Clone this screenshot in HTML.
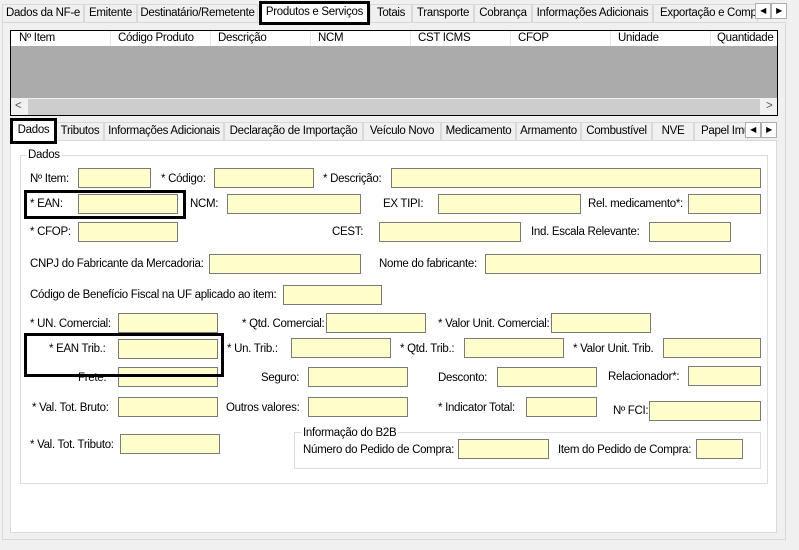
<!DOCTYPE html>
<html><head><meta charset="utf-8"><style>
*{box-sizing:border-box;margin:0;padding:0}
body{width:799px;height:550px;background:#f0f0f0;font-family:"Liberation Sans",sans-serif;font-size:11.5px;color:#000;position:relative;overflow:hidden;letter-spacing:-0.3px}
.a{position:absolute;white-space:nowrap}
.t{position:absolute;height:18px;border:1px solid #d9d9d9;border-bottom:none;background:#f0f0f0;line-height:17px;text-align:center;white-space:nowrap;overflow:hidden}
.i{position:absolute;height:20px;background:#ffffcc;border:1px solid #7a7a7a}
.l{position:absolute;white-space:nowrap;line-height:14px}
.bx{position:absolute;border:3px solid #000}
.sb{position:absolute;width:16px;height:16px;border:1px solid #adadad;background:#fff;font-size:8px;text-align:center;line-height:14px}
</style></head><body>
<!-- outer page -->
<div class="a" style="left:2px;top:22px;width:784px;height:518px;border:1px solid #d9d9d9;background:#f0f0f0"></div>
<div class="t" style="left:2px;top:4px;width:82px">Dados da NF-e</div>
<div class="t" style="left:84px;top:4px;width:53px">Emitente</div>
<div class="t" style="left:137px;top:4px;width:121px">Destinatário/Remetente</div>
<div class="t" style="left:370px;top:4px;width:42px">Totais</div>
<div class="t" style="left:412px;top:4px;width:62px">Transporte</div>
<div class="t" style="left:474px;top:4px;width:58px">Cobrança</div>
<div class="t" style="left:532px;top:4px;width:121px">Informações Adicionais</div>
<div class="t" style="left:653px;top:4px;width:105px;text-align:left;padding-left:6px">Exportação e Compra</div>
<div class="a" style="left:259px;top:1px;width:111px;height:24px;background:#fff;border:3px solid #000;text-align:center;line-height:17px">Produtos e Serviços</div>
<div class="sb" style="left:755px;top:3px">◀</div><div class="sb" style="left:771px;top:3px">▶</div>
<!-- grid -->
<div class="a" style="left:10px;top:30px;width:768px;height:86px;border:1px solid #000;background:#f0f0f0">
 <div class="a" style="left:0;top:0;width:766px;height:15px;background:#fff;line-height:15px">
  <span class="a" style="left:8px">Nº Item</span><span class="a" style="left:107px">Código Produto</span><span class="a" style="left:207px">Descrição</span><span class="a" style="left:307px">NCM</span><span class="a" style="left:407px">CST ICMS</span><span class="a" style="left:507px">CFOP</span><span class="a" style="left:607px">Unidade</span><span class="a" style="left:706px">Quantidade</span>
  <div class="a" style="left:99px;top:0;width:1px;height:15px;background:#e5e5e5"></div><div class="a" style="left:199px;top:0;width:1px;height:15px;background:#e5e5e5"></div><div class="a" style="left:299px;top:0;width:1px;height:15px;background:#e5e5e5"></div><div class="a" style="left:399px;top:0;width:1px;height:15px;background:#e5e5e5"></div><div class="a" style="left:499px;top:0;width:1px;height:15px;background:#e5e5e5"></div><div class="a" style="left:599px;top:0;width:1px;height:15px;background:#e5e5e5"></div><div class="a" style="left:699px;top:0;width:1px;height:15px;background:#e5e5e5"></div>
 </div>
 <div class="a" style="left:0;top:15px;width:766px;height:52px;background:#ababab"></div>
 <div class="a" style="left:0;top:68px;width:766px;height:16px;background:#f0f0f0"><span class="a" style="left:4px;top:1px;color:#555">&lt;</span><div class="a" style="left:17px;top:0;width:732px;height:16px;background:#cdcdcd"></div><span class="a" style="left:755px;top:1px;color:#555">&gt;</span></div>
</div>
<!-- inner tabs -->
<div class="a" style="left:10px;top:140px;width:767px;height:393px;border:1px solid #d9d9d9;background:#fff"></div>
<div class="t" style="left:56px;top:122px;width:48px">Tributos</div>
<div class="t" style="left:104px;top:122px;width:120px">Informações Adicionais</div>
<div class="t" style="left:224px;top:122px;width:139px">Declaração de Importação</div>
<div class="t" style="left:363px;top:122px;width:78px">Veículo Novo</div>
<div class="t" style="left:441px;top:122px;width:75px">Medicamento</div>
<div class="t" style="left:516px;top:122px;width:65px">Armamento</div>
<div class="t" style="left:581px;top:122px;width:71px">Combustível</div>
<div class="t" style="left:652px;top:122px;width:42px">NVE</div>
<div class="t" style="left:694px;top:122px;width:54px;text-align:left;padding-left:6px">Papel Imune</div>
<div class="a" style="left:10px;top:118px;width:47px;height:26px;background:#fff;border:3px solid #000;text-align:center;line-height:18px">Dados</div>
<div class="sb" style="left:745px;top:122px">◀</div><div class="sb" style="left:761px;top:122px">▶</div>
<!-- group -->
<div class="a" style="left:20px;top:155px;width:748px;height:329px;border:1px solid #dcdcdc"></div>
<div class="l" style="left:26px;top:148px;background:#fff;padding:0 2px">Dados</div>

<div class="l" style="left:30px;top:172px">Nº Item:</div><div class="i" style="left:78px;top:168px;width:73px"></div>
<div class="l" style="left:161px;top:172px">* Código:</div><div class="i" style="left:214px;top:168px;width:100px"></div>
<div class="l" style="left:323px;top:172px">* Descrição:</div><div class="i" style="left:391px;top:168px;width:370px"></div>

<div class="l" style="left:30px;top:197px">* EAN:</div><div class="i" style="left:78px;top:194px;width:100px"></div>
<div class="bx" style="left:24px;top:190px;width:162px;height:29px"></div>
<div class="l" style="left:190px;top:197px">NCM:</div><div class="i" style="left:227px;top:194px;width:134px"></div>
<div class="l" style="left:383px;top:197px">EX TIPI:</div><div class="i" style="left:438px;top:194px;width:143px"></div>
<div class="l" style="left:588px;top:197px">Rel. medicamento*:</div><div class="i" style="left:688px;top:194px;width:73px"></div>

<div class="l" style="left:30px;top:225px">* CFOP:</div><div class="i" style="left:78px;top:222px;width:100px"></div>
<div class="l" style="left:332px;top:225px">CEST:</div><div class="i" style="left:379px;top:222px;width:142px"></div>
<div class="l" style="left:531px;top:225px">Ind. Escala Relevante:</div><div class="i" style="left:649px;top:222px;width:82px"></div>

<div class="l" style="left:30px;top:257px">CNPJ do Fabricante da Mercadoria:</div><div class="i" style="left:209px;top:254px;width:152px"></div>
<div class="l" style="left:379px;top:257px">Nome do fabricante:</div><div class="i" style="left:485px;top:254px;width:276px"></div>

<div class="l" style="left:30px;top:288px">Código de Benefício Fiscal na UF aplicado ao item:</div><div class="i" style="left:283px;top:285px;width:99px"></div>

<div class="l" style="left:30px;top:317px">* UN. Comercial:</div><div class="i" style="left:118px;top:313px;width:100px"></div>
<div class="l" style="left:242px;top:317px">* Qtd. Comercial:</div><div class="i" style="left:326px;top:313px;width:100px"></div>
<div class="l" style="left:438px;top:317px">* Valor Unit. Comercial:</div><div class="i" style="left:551px;top:313px;width:100px"></div>

<div class="l" style="left:49px;top:342px">* EAN Trib.:</div><div class="i" style="left:118px;top:339px;width:100px"></div>
<div class="l" style="left:227px;top:342px">* Un. Trib.:</div><div class="i" style="left:291px;top:338px;width:100px"></div>
<div class="l" style="left:400px;top:342px">* Qtd. Trib.:</div><div class="i" style="left:464px;top:338px;width:100px"></div>
<div class="l" style="left:573px;top:342px">* Valor Unit. Trib.</div><div class="i" style="left:663px;top:338px;width:98px"></div>

<div class="l" style="left:78px;top:371px">Frete:</div><div class="i" style="left:118px;top:367px;width:100px"></div>
<div class="bx" style="left:24px;top:333px;width:200px;height:44px"></div>
<div class="l" style="left:261px;top:371px">Seguro:</div><div class="i" style="left:308px;top:367px;width:100px"></div>
<div class="l" style="left:438px;top:371px">Desconto:</div><div class="i" style="left:497px;top:367px;width:100px"></div>
<div class="l" style="left:608px;top:370px">Relacionador*:</div><div class="i" style="left:688px;top:366px;width:73px"></div>

<div class="l" style="left:32px;top:401px">* Val. Tot. Bruto:</div><div class="i" style="left:118px;top:397px;width:100px"></div>
<div class="l" style="left:226px;top:401px">Outros valores:</div><div class="i" style="left:308px;top:397px;width:100px"></div>
<div class="l" style="left:438px;top:401px">* Indicator Total:</div><div class="i" style="left:526px;top:397px;width:71px"></div>
<div class="l" style="left:613px;top:404px">Nº FCI:</div><div class="i" style="left:649px;top:401px;width:112px"></div>

<div class="l" style="left:30px;top:438px">* Val. Tot. Tributo:</div><div class="i" style="left:120px;top:434px;width:100px"></div>

<div class="a" style="left:294px;top:432px;width:467px;height:37px;border:1px solid #dcdcdc"></div>
<div class="l" style="left:301px;top:426px;background:#fff;padding:0 2px">Informação do B2B</div>
<div class="l" style="left:303px;top:443px">Número do Pedido de Compra:</div><div class="i" style="left:458px;top:439px;width:91px"></div>
<div class="l" style="left:558px;top:443px">Item do Pedido de Compra:</div><div class="i" style="left:696px;top:439px;width:47px"></div>
</body></html>
